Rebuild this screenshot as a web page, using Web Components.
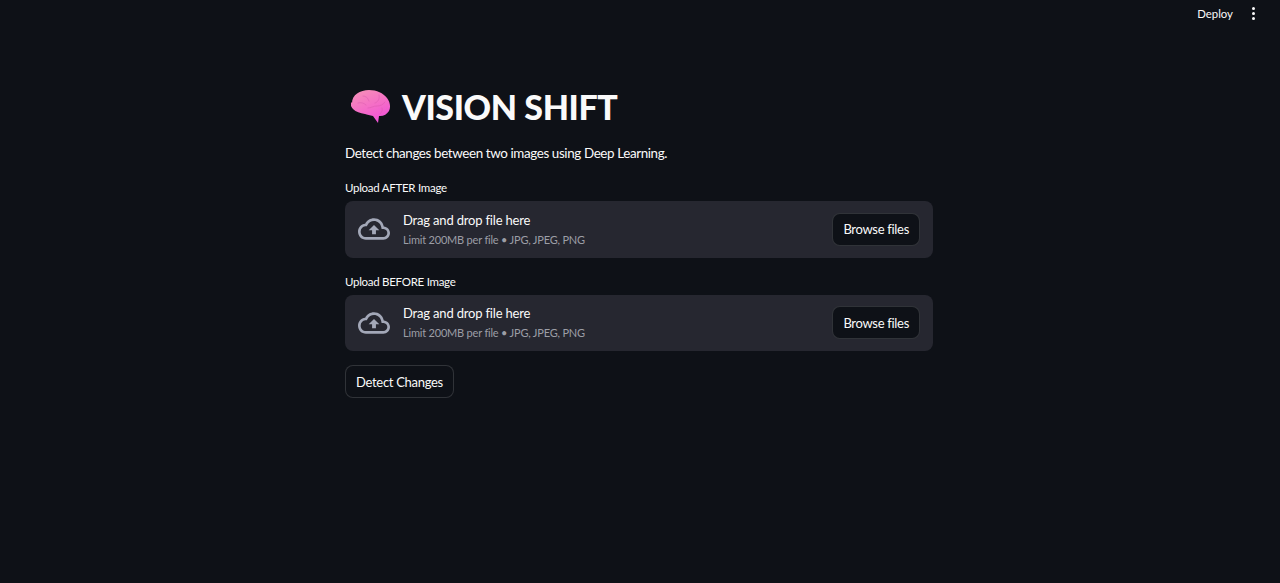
<!DOCTYPE html>
<html>
<head>
<meta charset="utf-8">
<title>Vision Shift</title>
<style>
    html, body{ margin: 0; padding: 0; height: 100%; background: #0e1117; }
    body{ font-family: Lato, "Noto Sans", sans-serif; color: #fafafa; overflow: hidden; }
</style>
</head>
<body>
<vs-app>
    <vs-header slot="header"></vs-header>
    <vs-title>VISION SHIFT</vs-title>
    <vs-text>Detect changes between two images using Deep Learning.</vs-text>
    <vs-uploader label="Upload AFTER Image"></vs-uploader>
    <vs-uploader label="Upload BEFORE Image"></vs-uploader>
    <vs-button class="submit">Detect Changes</vs-button>
</vs-app>

<script>
class VsApp extends HTMLElement{
    constructor(){
        super();
        this.attachShadow({mode: 'open'}).innerHTML = `
            <style>
                :host{ display: block; height: 100%; padding-right: 2px; box-sizing: border-box; }
                main{
                    width: 588px;
                    margin: 0 auto;
                    padding-top: 48px;
                    display: flex;
                    flex-direction: column;
                    align-items: stretch;
                }
                ::slotted(.submit){ margin-top: 14px; }
            </style>
            <slot name="header"></slot>
            <main><slot></slot></main>
        `;
    }
}

class VsHeader extends HTMLElement{
    constructor(){
        super();
        this.attachShadow({mode: 'open'}).innerHTML = `
            <style>
                :host{
                    display: flex;
                    justify-content: flex-end;
                    align-items: center;
                    height: 27px;
                    padding-right: 25px;
                    margin-right: -2px;
                    gap: 19px;
                    font-size: 11.4px;
                }
                .dots{ display: flex; flex-direction: column; gap: 2px; }
                .dots i{ width: 3px; height: 3px; border-radius: 50%; background: #fafafa; display: block; }
            </style>
            <span>Deploy</span>
            <div class="dots"><i></i><i></i><i></i></div>
        `;
    }
}

class VsTitle extends HTMLElement{
    constructor(){
        super();
        this.attachShadow({mode: 'open'}).innerHTML = `
            <style>
                :host{
                    display: flex;
                    align-items: center;
                    height: 62px;
                    padding-left: 6px;
                    gap: 11px;
                    font-size: 34px;
                    font-weight: 900;
                    letter-spacing: -0.4px;
                }
                svg{ display: block; width: 40px; height: 38px; }
            </style>
            <svg viewBox="0 0 40 38">
                <defs>
                    <linearGradient id="brain" x1="0.2" y1="0" x2="0.7" y2="1">
                        <stop offset="0" stop-color="#f58fb8"/>
                        <stop offset="0.55" stop-color="#f56cc8"/>
                        <stop offset="1" stop-color="#f050d8"/>
                    </linearGradient>
                </defs>
                <path fill="url(#brain)" d="M1 16C1 8 9 3 18 3c8 0 14 3 18 8 3 4 4 9 2 13-2 3-5 5-9 5h-1l-1 7-5-7c-3-1-6-1-8-2-5-1-9-2-12-5-2-2-3-5-3-8z"/>
                <g fill="none" stroke="#dc5cb0" stroke-width="1" stroke-linecap="round" opacity=".5">
                    <path d="M28 8c1 4-1 7-4 8M34 15c-2 3-5 4-8 4-4 0-6 2-9 2"/>
                    <path d="M12 9c3 0 5 2 6 5M7 16c3-1 6 0 8 2"/>
                    <path d="M31 21c1 2 0 4-2 6"/>
                </g>
            </svg>
            <slot></slot>
        `;
    }
}

class VsText extends HTMLElement{
    constructor(){
        super();
        this.attachShadow({mode: 'open'}).innerHTML = `
            <style>
                :host{
                    display: block;
                    height: 21px;
                    line-height: 20px;
                    margin-top: 6px;
                    font-size: 13.4px;
                    letter-spacing: -0.38px;
                }
            </style>
            <slot></slot>
        `;
    }
}

class VsUploader extends HTMLElement{
    constructor(){
        super();
        this.attachShadow({mode: 'open'}).innerHTML = `
            <style>
                :host{ display: block; margin-top: 14px; }
                label{
                    display: block;
                    height: 23px;
                    line-height: 20px;
                    font-size: 11.5px;
                    letter-spacing: -0.28px;
                }
                .zone{
                    display: flex;
                    align-items: center;
                    height: 56.5px;
                    box-sizing: border-box;
                    padding: 0 13px;
                    border-radius: 8px;
                    background: #262730;
                }
                svg{ width: 32px; height: 32px; fill: #a3a8b8; flex: none; margin-right: 13px; }
                .info{ flex: 1; display: flex; flex-direction: column; padding-top: 1px; }
                .drop{ font-size: 13px; line-height: 20px; letter-spacing: -0.18px; }
                .limit{ font-size: 11px; line-height: 20px; color: #9c9ea6; letter-spacing: -0.2px; }
            </style>
            <label></label>
            <div class="zone">
                <svg viewBox="0 0 24 24"><path d="M19.35 10.04C18.67 6.59 15.64 4 12 4 9.11 4 6.6 5.64 5.35 8.04 2.34 8.36 0 10.91 0 14c0 3.31 2.69 6 6 6h13c2.76 0 5-2.24 5-5 0-2.64-2.05-4.78-4.65-4.96zM19 18H6c-2.21 0-4-1.79-4-4 0-2.05 1.53-3.76 3.56-3.97l1.07-.11.5-.95C8.08 7.14 9.94 6 12 6c2.62 0 4.88 1.86 5.39 4.43l.3 1.5 1.53.11c1.56.1 2.78 1.41 2.78 2.96 0 1.65-1.35 3-3 3zM8 13h2.55v3h2.9v-3H16l-4-4z"/></svg>
                <div class="info">
                    <span class="drop">Drag and drop file here</span>
                    <span class="limit">Limit 200MB per file • JPG, JPEG, PNG</span>
                </div>
                <vs-button>Browse files</vs-button>
            </div>
        `;
    }

    connectedCallback(){
        this.shadowRoot.querySelector('label').textContent = this.getAttribute('label');
    }
}

class VsButton extends HTMLElement{
    constructor(){
        super();
        this.attachShadow({mode: 'open'}).innerHTML = `
            <style>
                :host{ display: flex; }
                button{
                    height: 33px;
                    padding: 0 10px;
                    border: 1px solid rgba(250,250,250,0.15);
                    border-radius: 8px;
                    background: #0e1117;
                    color: #fafafa;
                    font: inherit;
                    font-size: 13px;
                    letter-spacing: -0.3px;
                }
            </style>
            <button><slot></slot></button>
        `;
    }
}

customElements.define('vs-app', VsApp);
customElements.define('vs-header', VsHeader);
customElements.define('vs-title', VsTitle);
customElements.define('vs-text', VsText);
customElements.define('vs-uploader', VsUploader);
customElements.define('vs-button', VsButton);
</script>
</body>
</html>
